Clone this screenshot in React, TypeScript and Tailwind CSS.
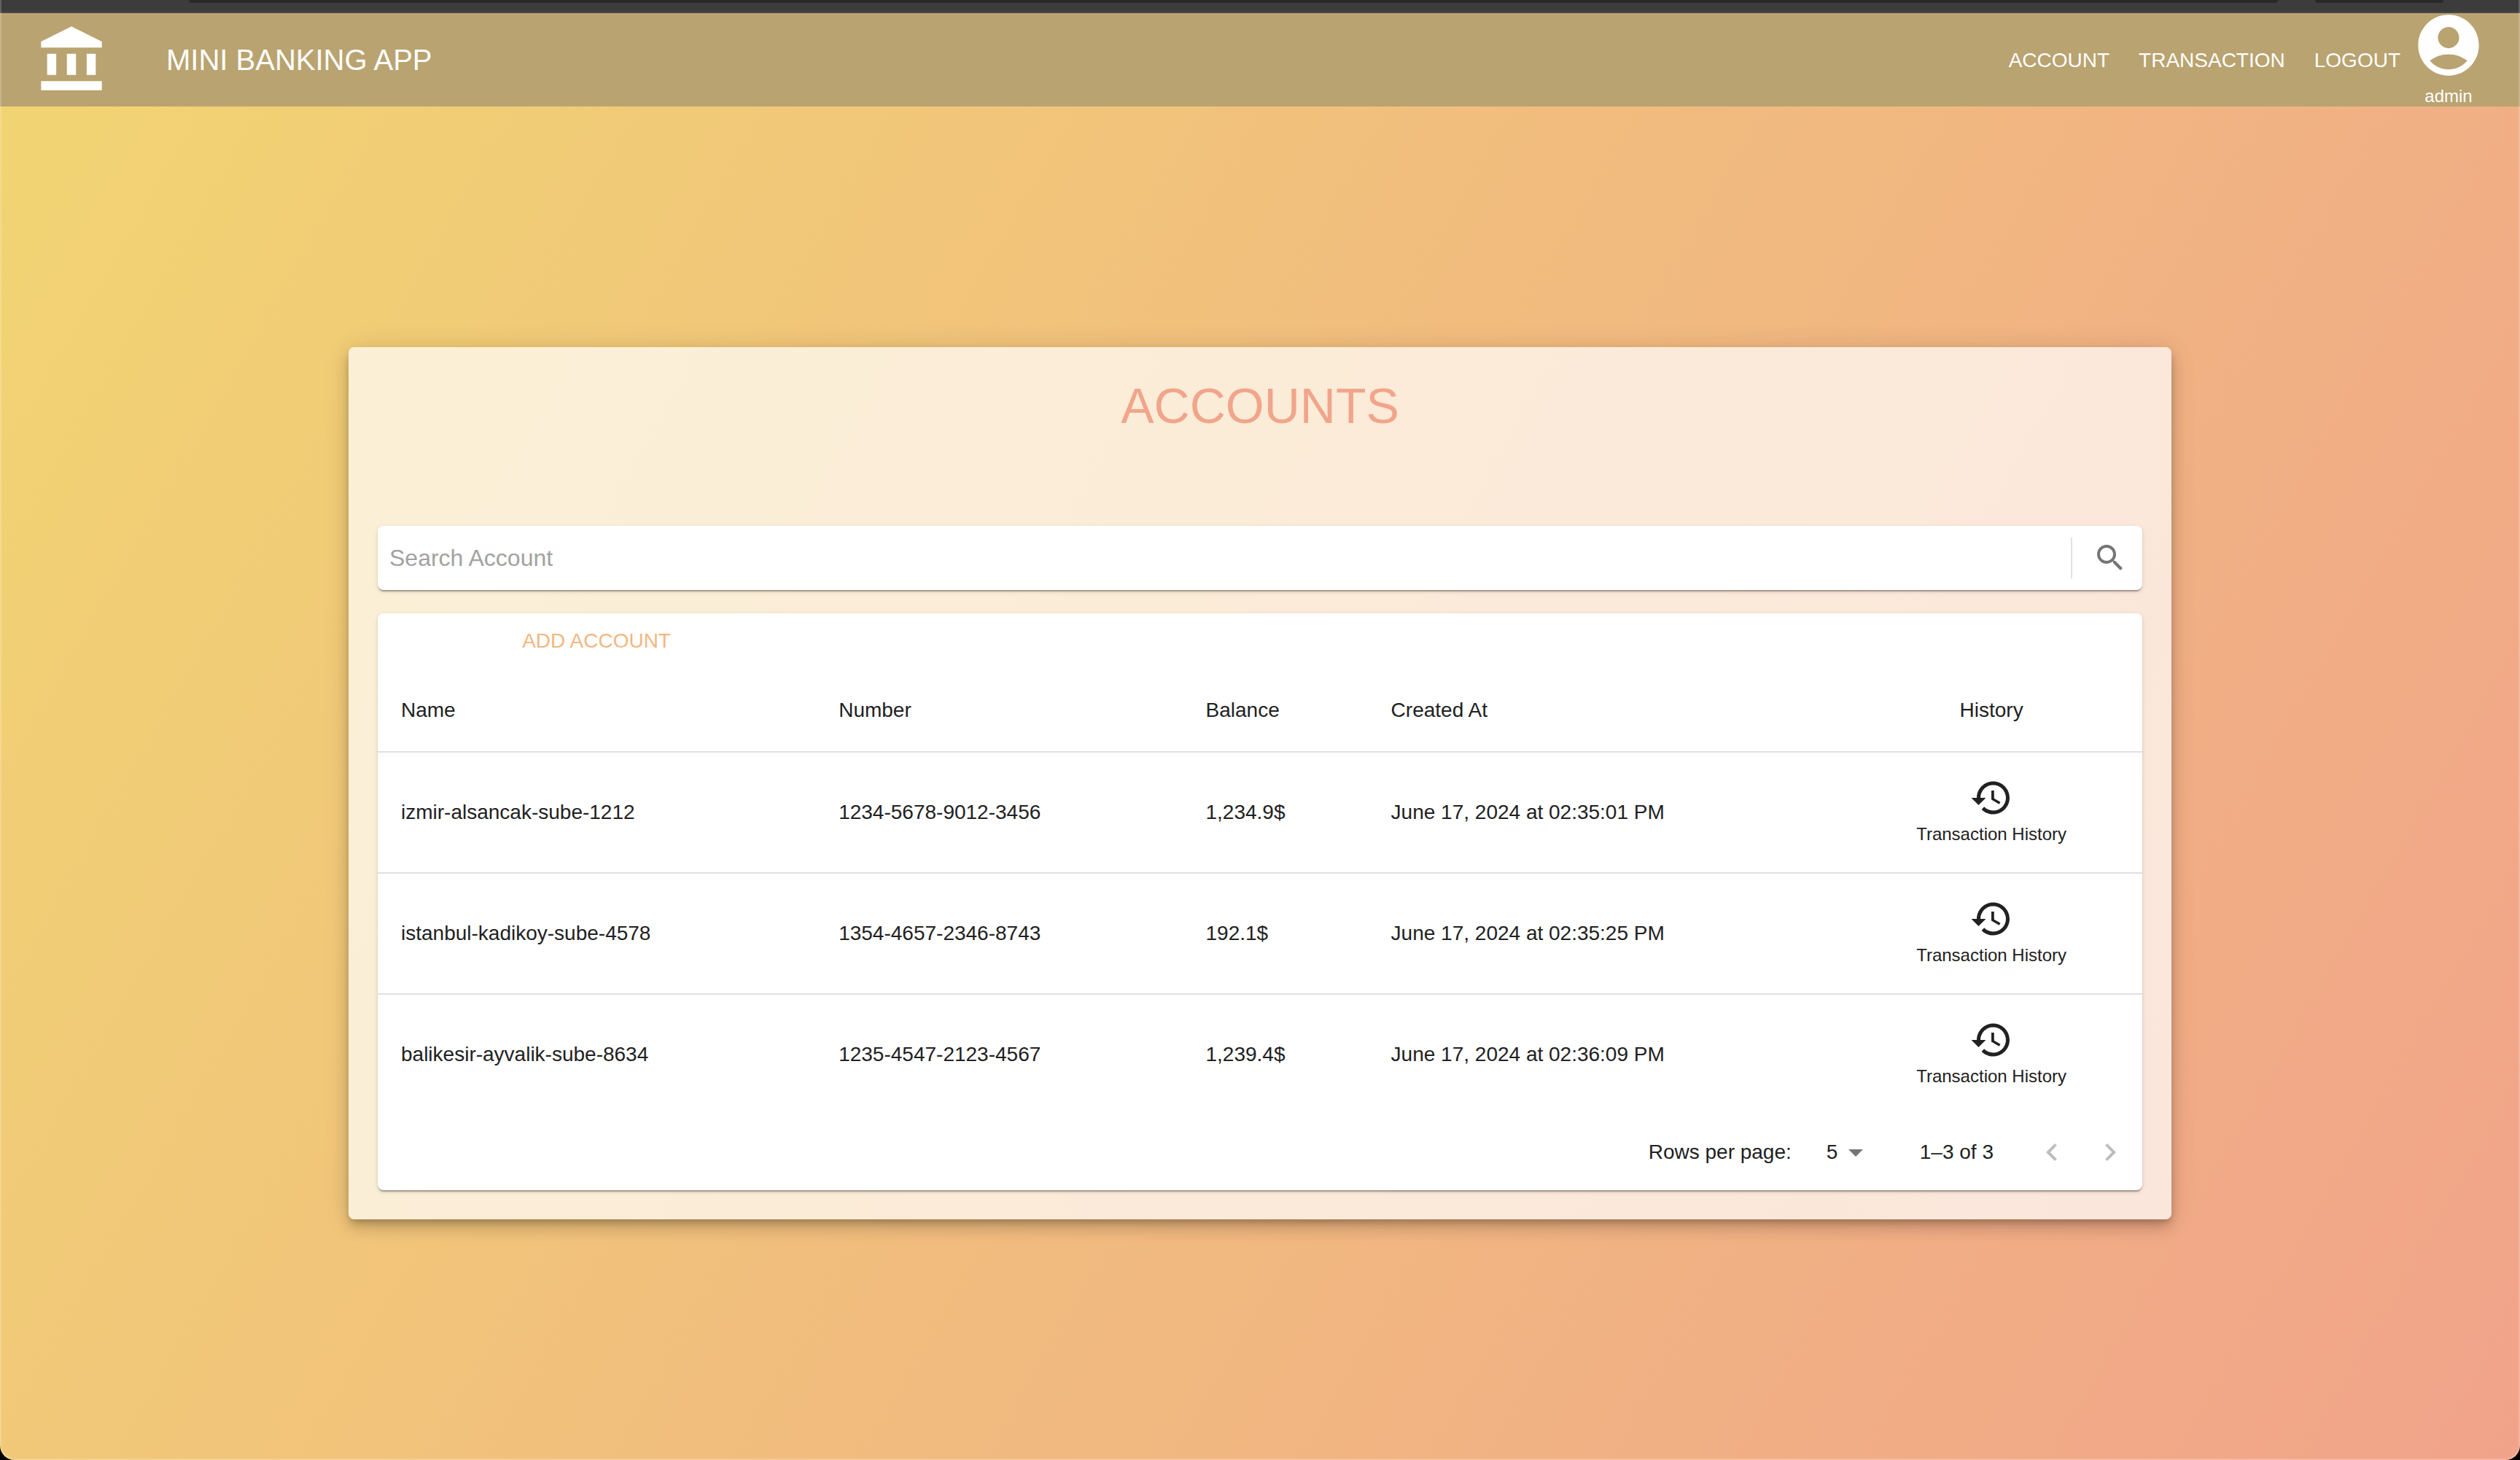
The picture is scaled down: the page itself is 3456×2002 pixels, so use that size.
import type { ReactNode } from "react";

type IconProps = { path: string; className: string };

function Icon({ path, className }: IconProps) {
  return (
    <svg viewBox="0 0 24 24" fill="currentColor" aria-hidden="true" className={className}>
      <path d={path} />
    </svg>
  );
}

const icons = {
  bank: "M4 10h3v7H4zm6.5 0h3v7h-3zM2 19h20v3H2zm15-9h3v7h-3zm-5-9L2 6v2h20V6z",
  user: "M12 2C6.48 2 2 6.48 2 12s4.48 10 10 10 10-4.48 10-10S17.52 2 12 2m0 4c1.93 0 3.5 1.57 3.5 3.5S13.93 13 12 13s-3.5-1.57-3.5-3.5S10.07 6 12 6m0 14c-2.03 0-4.43-.82-6.14-2.88C7.55 15.8 9.68 15 12 15s4.45.8 6.14 2.12C16.43 19.18 14.03 20 12 20",
  search:
    "M15.5 14h-.79l-.28-.27C15.41 12.59 16 11.11 16 9.5 16 5.91 13.09 3 9.5 3S3 5.91 3 9.5 5.91 16 9.5 16c1.61 0 3.09-.59 4.23-1.57l.27.28v.79l5 4.99L20.49 19zm-6 0C7.01 14 5 11.99 5 9.5S7.01 5 9.5 5 14 7.01 14 9.5 11.99 14 9.5 14",
  history:
    "M13 3c-4.97 0-9 4.03-9 9H1l3.89 3.89.07.14L9 12H6c0-3.87 3.13-7 7-7s7 3.13 7 7-3.13 7-7 7c-1.93 0-3.68-.79-4.94-2.06l-1.42 1.42C8.27 19.99 10.51 21 13 21c4.97 0 9-4.03 9-9s-4.03-9-9-9m-1 5v5l4.28 2.54.72-1.21-3.5-2.08V8z",
  dropDown: "m7 10 5 5 5-5z",
  left: "M15.41 7.41 14 6l-6 6 6 6 1.41-1.41L10.83 12z",
  right: "M10 6 8.59 7.41 13.17 12l-4.58 4.59L10 18l6-6z",
};

const accounts = [
  { name: "izmir-alsancak-sube-1212", number: "1234-5678-9012-3456", balance: "1,234.9$", created: "June 17, 2024 at 02:35:01 PM" },
  { name: "istanbul-kadikoy-sube-4578", number: "1354-4657-2346-8743", balance: "192.1$", created: "June 17, 2024 at 02:35:25 PM" },
  { name: "balikesir-ayvalik-sube-8634", number: "1235-4547-2123-4567", balance: "1,239.4$", created: "June 17, 2024 at 02:36:09 PM" },
];

function BrowserEdge() {
  return (
    <div className="flex h-[18px] items-start border-b-2 border-[#444746] bg-[#3c3c3c] pr-[105px] pl-[259px]">
      <div className="h-1 flex-1 rounded-b-lg bg-[#282828]" />
      <div className="ml-[51px] h-1 w-44 rounded-b-lg bg-[#282828]" />
    </div>
  );
}

function Header() {
  return (
    <header className="flex h-32 items-center bg-[#b9a370] px-12 text-white">
      <Icon path={icons.bank} className="size-[100px]" />
      <p className="ml-20 text-[40px] leading-16">MINI BANKING APP</p>
      <nav className="ml-auto flex gap-2 text-[28px] leading-[49px]">
        <a href="#account" className="px-4">ACCOUNT</a>
        <a href="#transaction" className="px-4">TRANSACTION</a>
        <a href="#logout" className="px-4">LOGOUT</a>
      </nav>
      <button type="button" className="flex flex-col items-center">
        <Icon path={icons.user} className="size-[100px]" />
        <span className="text-2xl leading-10">admin</span>
      </button>
    </header>
  );
}

function Paper({ className, children }: { className: string; children: ReactNode }) {
  return (
    <div
      className={
        "rounded-lg bg-white shadow-[0_4px_2px_-2px_rgba(0,0,0,0.2),0_2px_2px_0_rgba(0,0,0,0.14),0_2px_6px_0_rgba(0,0,0,0.12)] " +
        className
      }
    >
      {children}
    </div>
  );
}

function SearchBar() {
  return (
    <Paper className="mt-[125px] flex h-[88px] items-center">
      <input
        type="search"
        aria-label="Search Account"
        placeholder="Search Account"
        className="h-full min-w-0 flex-1 bg-transparent px-4 text-[32px] outline-none placeholder:text-[#a2a2a2]"
      />
      <div className="mx-2 h-14 w-0.5 bg-[#e0e0e0]" />
      <button type="button" aria-label="Search" className="p-5 text-[#757575]">
        <Icon path={icons.search} className="size-12" />
      </button>
    </Paper>
  );
}

function AccountTable() {
  return (
    <table className="w-full table-fixed text-left text-[28px] leading-12">
      <colgroup>
        <col className="w-[24.8%]" />
        <col className="w-[20.8%]" />
        <col className="w-[10.5%]" />
        <col className="w-[26.8%]" />
        <col className="w-[17.1%]" />
      </colgroup>
      <thead>
        <tr className="border-b-2 border-[#e0e0e0]">
          <th className="p-8 font-normal">Name</th>
          <th className="p-8 font-normal">Number</th>
          <th className="p-8 font-normal">Balance</th>
          <th className="p-8 font-normal">Created At</th>
          <th className="p-8 text-center font-normal">History</th>
        </tr>
      </thead>
      <tbody>
        {accounts.map((account) => (
          <tr key={account.number} className="border-b-2 border-[#e0e0e0] last:border-b-0">
            <td className="px-8">{account.name}</td>
            <td className="px-8">{account.number}</td>
            <td className="px-8">{account.balance}</td>
            <td className="px-8">{account.created}</td>
            <td className="p-8">
              <button type="button" className="mx-auto flex flex-col items-center">
                <Icon path={icons.history} className="size-15" />
                <span className="text-2xl leading-10">Transaction History</span>
              </button>
            </td>
          </tr>
        ))}
      </tbody>
    </table>
  );
}

function Pagination() {
  return (
    <div className="flex h-26 items-center justify-end pr-1 text-[28px] leading-10">
      <label htmlFor="rows-per-page">Rows per page:</label>
      <div className="relative mr-16 ml-8">
        <select id="rows-per-page" defaultValue="5" className="w-20 appearance-none bg-transparent pl-4 outline-none">
          <option value="5">5</option>
          <option value="10">10</option>
          <option value="25">25</option>
        </select>
        <Icon path={icons.dropDown} className="pointer-events-none absolute inset-y-0 right-0 my-auto size-12 text-[#757575]" />
      </div>
      <p>1–3 of 3</p>
      <div className="ml-10 flex text-[#bdbdbd]">
        <button type="button" aria-label="Previous page" disabled className="p-4">
          <Icon path={icons.left} className="size-12" />
        </button>
        <button type="button" aria-label="Next page" disabled className="p-4">
          <Icon path={icons.right} className="size-12" />
        </button>
      </div>
    </div>
  );
}

export default function App() {
  return (
    <div className="min-h-screen bg-black font-['Liberation_Sans',Arial,sans-serif] text-[#212121]">
      <div className="relative flex min-h-screen flex-col overflow-hidden rounded-b-[20px] bg-[linear-gradient(120deg,#f1d572_0%,#f1a38a_100%)]">
        <BrowserEdge />
        <Header />
        <main className="flex flex-1 items-center justify-center p-10">
          <section className="w-full max-w-[2500px] rounded-lg bg-white/70 p-10 shadow-[0_6px_10px_-2px_rgba(0,0,0,0.2),0_12px_20px_0_rgba(0,0,0,0.14),0_2px_36px_0_rgba(0,0,0,0.12)]">
            <h1 className="text-center text-[68px] leading-20 text-[#f1a58b]">ACCOUNTS</h1>
            <SearchBar />
            <Paper className="mt-8">
              <button type="button" className="mb-0.5 block h-[75px] w-[24.8%] text-[28px] text-[#f3b780]">
                ADD ACCOUNT
              </button>
              <AccountTable />
              <Pagination />
            </Paper>
          </section>
        </main>
        <div className="pointer-events-none absolute inset-0 rounded-b-[20px] border-x-2 border-b-2 border-white/20" />
      </div>
    </div>
  );
}
